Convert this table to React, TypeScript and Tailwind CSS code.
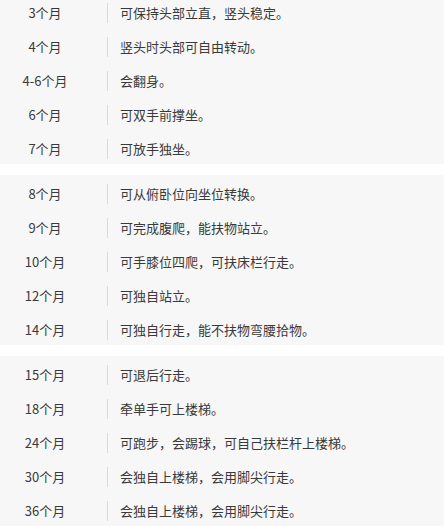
import React from "react";

const groups: [string, string][][] = [
  [
    ["3个月", "可保持头部立直，竖头稳定。"],
    ["4个月", "竖头时头部可自由转动。"],
    ["4-6个月", "会翻身。"],
    ["6个月", "可双手前撑坐。"],
    ["7个月", "可放手独坐。"],
  ],
  [
    ["8个月", "可从俯卧位向坐位转换。"],
    ["9个月", "可完成腹爬，能扶物站立。"],
    ["10个月", "可手膝位四爬，可扶床栏行走。"],
    ["12个月", "可独自站立。"],
    ["14个月", "可独自行走，能不扶物弯腰拾物。"],
  ],
  [
    ["15个月", "可退后行走。"],
    ["18个月", "牵单手可上楼梯。"],
    ["24个月", "可跑步，会踢球，可自己扶栏杆上楼梯。"],
    ["30个月", "会独自上楼梯，会用脚尖行走。"],
    ["36个月", "会独自上楼梯，会用脚尖行走。"],
  ],
];

export default function App() {
  return (
    <div
      className="w-[444px] h-[527px] overflow-hidden bg-white text-[13px] text-[#3a3a3a]"
      style={{ fontFamily: '"Noto Sans CJK SC", "Noto Sans", sans-serif' }}
    >
      <div className="-mt-[6px] flex flex-col gap-[11px]">
        {groups.map((g, gi) => (
          <div key={gi} className="flex flex-col bg-[#f7f7f7]">
            {g.map(([age, desc]) => (
              <div key={age} className="flex h-[34px] items-start pt-[9px]">
                <div className="w-[90px] text-center leading-[20px]">{age}</div>
                <div className="ml-[17px] border-l border-[#dadada] pl-[12px] leading-[20px]">
                  {desc}
                </div>
              </div>
            ))}
          </div>
        ))}
      </div>
    </div>
  );
}
